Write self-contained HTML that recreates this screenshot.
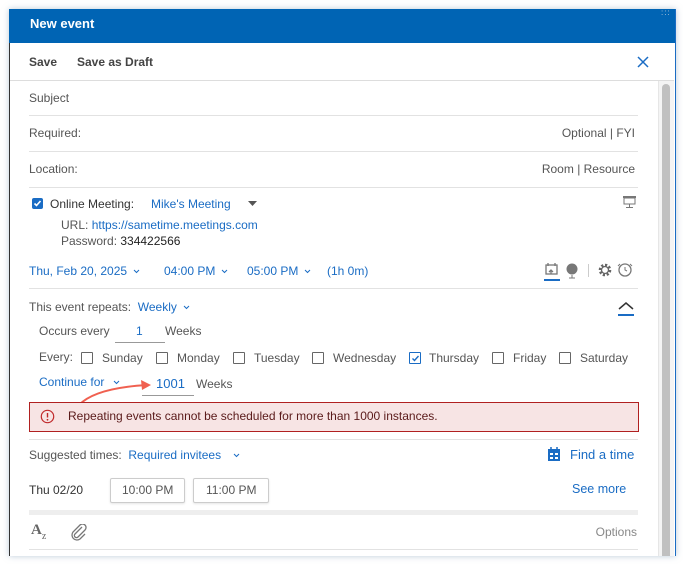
<!DOCTYPE html>
<html><head><style>
body{margin:0;width:683px;height:564px;background:#fff;position:relative;overflow:hidden;font-family:"Liberation Sans",Arial,sans-serif;font-size:12px;color:#555}
.a{position:absolute;white-space:nowrap;line-height:14px}
.l{position:absolute;height:1px;background:#e2e2e2;left:29px;width:609px}
.b{color:#1a6cc4}
.cb{position:absolute;width:10px;height:10px;border:1px solid #666;border-radius:1px;background:#fff}
.cv{display:inline-block;width:7px;height:5px;vertical-align:middle;margin-left:6px}
</style></head><body>
<div style="position:absolute;left:9px;top:9px;width:665px;height:547px;border-left:1px solid #333;border-right:1px solid #1a6cc4;box-shadow:0 0 6px rgba(120,150,180,.5);background:#fff"></div>
<div style="position:absolute;left:9px;top:9px;width:666px;height:34px;background:#0064b4"></div>
<div class="a" style="left:30px;top:17px;color:#fff;font-weight:bold;font-size:13px">New event</div>
<div class="a" style="left:661px;top:10px;color:#bcd;font-size:8px;letter-spacing:1px;line-height:5px">:::</div>
<div class="a" style="left:29px;top:55px;font-weight:bold;color:#444">Save</div>
<div class="a" style="left:77px;top:55px;font-weight:bold;color:#444">Save as Draft</div>
<svg style="position:absolute;left:637px;top:56px" width="12" height="12"><path d="M1 1L11 11M11 1L1 11" stroke="#1a6cc4" stroke-width="1.5"/></svg>
<div style="position:absolute;left:10px;top:80px;width:664px;height:1px;background:#ddd"></div>
<div style="position:absolute;left:658px;top:81px;width:15px;height:475px;background:#f4f4f4;border-left:1px solid #e6e6e6"></div>
<div style="position:absolute;left:662px;top:84px;width:8px;height:472px;background:#c0c0c0;border-radius:4px 4px 0 0"></div>
<div class="a" style="left:29px;top:91px">Subject</div>
<div class="l" style="top:115px"></div>
<div class="a" style="left:29px;top:126px">Required:</div>
<div class="a" style="right:48px;top:126px">Optional | FYI</div>
<div class="l" style="top:151px"></div>
<div class="a" style="left:29px;top:162px">Location:</div>
<div class="a" style="right:48px;top:162px">Room | Resource</div>
<div class="l" style="top:187px"></div>
<div style="position:absolute;left:32px;top:198px;width:11px;height:11px;background:#1a6cc4;border-radius:2px"></div>
<svg style="position:absolute;left:32px;top:198px" width="11" height="11"><path d="M2.5 5.5L4.5 7.5L8.5 3" stroke="#fff" stroke-width="1.6" fill="none"/></svg>
<div class="a" style="left:50px;top:197px;color:#333">Online Meeting:</div>
<div class="a b" style="left:151px;top:197px">Mike's Meeting</div>
<svg style="position:absolute;left:248px;top:201px" width="9" height="6"><path d="M0 0H9L4.5 5z" fill="#555"/></svg>
<svg style="position:absolute;left:622px;top:195px" width="15" height="14"><rect x="1" y="1" width="13" height="2" fill="#777"/><rect x="2" y="3" width="11" height="6" fill="none" stroke="#777"/><path d="M7.5 9V12M4 12.5H11" stroke="#777"/></svg>
<div class="a" style="left:61px;top:218px">URL: <span class="b">https://sametime.meetings.com</span></div>
<div class="a" style="left:61px;top:234px">Password: <span style="color:#222">334422566</span></div>
<div class="a b" style="left:29px;top:264px">Thu, Feb 20, 2025<svg class="cv" viewBox="0 0 7 5"><path d="M1 1l2.5 2.5L6 1" stroke="#1a6cc4" fill="none"/></svg></div>
<div class="a b" style="left:164px;top:264px">04:00 PM<svg class="cv" viewBox="0 0 7 5"><path d="M1 1l2.5 2.5L6 1" stroke="#1a6cc4" fill="none"/></svg></div>
<div class="a b" style="left:247px;top:264px">05:00 PM<svg class="cv" viewBox="0 0 7 5"><path d="M1 1l2.5 2.5L6 1" stroke="#1a6cc4" fill="none"/></svg></div>
<div class="a b" style="left:327px;top:264px">(1h 0m)</div>
<svg style="position:absolute;left:543px;top:262px" width="100" height="20"><g fill="none" stroke="#777" stroke-width="1.3"><rect x="3" y="3" width="11" height="9"/><path d="M5 1v3M12 1v3M8 12V8M6 10l2-2 2 2"/></g><rect x="1" y="17" width="16" height="2" fill="#1a6cc4"/><circle cx="29" cy="7" r="5.5" fill="#777"/><path d="M29 13v3M26 16h6" stroke="#777"/><rect x="45" y="2" width="1" height="13" fill="#ccc"/><circle cx="62" cy="8" r="5" fill="none" stroke="#666" stroke-width="2.6" stroke-dasharray="2.2 1.7"/><circle cx="62" cy="8" r="3.5" fill="none" stroke="#666" stroke-width="1.3"/><circle cx="82" cy="8" r="6" fill="none" stroke="#777" stroke-width="1.3"/><path d="M82 5v3l2 1M77 2l-2 2M87 2l2 2" stroke="#777" fill="none"/></svg>
<div class="l" style="top:288px"></div>
<div class="a" style="left:29px;top:300px">This event repeats: &nbsp;<span class="b">Weekly<svg class="cv" viewBox="0 0 7 5"><path d="M1 1l2.5 2.5L6 1" stroke="#1a6cc4" fill="none"/></svg></span></div>
<svg style="position:absolute;left:617px;top:302px" width="18" height="14"><path d="M2 7L9 1L16 7" stroke="#333" stroke-width="1.5" fill="none"/><rect x="1" y="12" width="16" height="2" fill="#1a6cc4"/></svg>
<div class="a" style="left:39px;top:324px">Occurs every</div>
<div class="a b" style="left:136px;top:324px">1</div>
<div style="position:absolute;left:115px;top:342px;width:50px;height:1px;background:#999"></div>
<div class="a" style="left:165px;top:324px">Weeks</div>
<div class="a" style="left:39px;top:350px">Every:</div>
<div class="cb" style="left:81px;top:352px"></div><div class="a" style="left:102px;top:351px">Sunday</div>
<div class="cb" style="left:156px;top:352px"></div><div class="a" style="left:177px;top:351px">Monday</div>
<div class="cb" style="left:233px;top:352px"></div><div class="a" style="left:254px;top:351px">Tuesday</div>
<div class="cb" style="left:312px;top:352px"></div><div class="a" style="left:333px;top:351px">Wednesday</div>
<div class="cb" style="left:409px;top:352px;border-color:#1a6cc4"></div>
<svg style="position:absolute;left:411px;top:354px" width="9" height="9"><path d="M1.5 4.5L3.5 6.5L7.5 2" stroke="#1a6cc4" stroke-width="1.4" fill="none"/></svg>
<div class="a" style="left:429px;top:351px">Thursday</div>
<div class="cb" style="left:492px;top:352px"></div><div class="a" style="left:513px;top:351px">Friday</div>
<div class="cb" style="left:559px;top:352px"></div><div class="a" style="left:580px;top:351px">Saturday</div>
<div class="a b" style="left:39px;top:375px">Continue for<svg class="cv" style="margin-left:9px" viewBox="0 0 7 5"><path d="M1 1l2.5 2.5L6 1" stroke="#1a6cc4" fill="none"/></svg></div>
<div class="a b" style="left:156px;top:377px;font-size:13px">1001</div>
<div style="position:absolute;left:142px;top:395px;width:52px;height:1px;background:#999"></div>
<div class="a" style="left:196px;top:377px">Weeks</div>
<svg style="position:absolute;left:75px;top:378px" width="80" height="30"><path d="M4 27Q20 10 72 7" stroke="#f06050" stroke-width="2" fill="none"/><path d="M66 2L76 7L67 12z" fill="#f06050"/></svg>
<div style="position:absolute;left:29px;top:402px;width:608px;height:28px;background:#f7e4e4;border:1px solid #b02020"></div>
<svg style="position:absolute;left:40px;top:409px" width="15" height="15"><circle cx="7.5" cy="7.5" r="6.2" fill="none" stroke="#c0282a" stroke-width="1.2"/><path d="M7.5 4v4.5" stroke="#c0282a" stroke-width="1.4"/><circle cx="7.5" cy="10.8" r=".9" fill="#c0282a"/></svg>
<div class="a" style="left:68px;top:409px;color:#5a1a1a">Repeating events cannot be scheduled for more than 1000 instances.</div>
<div class="l" style="top:439px"></div>
<div class="a" style="left:29px;top:448px">Suggested times: &nbsp;<span class="b">Required invitees<svg class="cv" style="margin-left:12px" viewBox="0 0 7 5"><path d="M1 1l2.5 2.5L6 1" stroke="#1a6cc4" fill="none"/></svg></span></div>
<svg style="position:absolute;left:548px;top:447px" width="12" height="14"><rect x="0" y="2" width="12" height="12" fill="#1a6cc4"/><path d="M3 0v3M9 0v3" stroke="#1a6cc4" stroke-width="1.5"/><g fill="#fff"><rect x="2" y="6" width="3" height="2"/><rect x="7" y="6" width="3" height="2"/><rect x="2" y="10" width="3" height="2"/><rect x="7" y="10" width="3" height="2"/></g></svg>
<div class="a b" style="left:570px;top:448px;font-size:13px">Find a time</div>
<div class="a" style="left:29px;top:483px;color:#333;font-size:12px">Thu 02/20</div>
<div style="position:absolute;left:110px;top:478px;width:73px;height:23px;border:1px solid #ccc;border-radius:2px;box-shadow:0 1px 2px rgba(0,0,0,.1)"></div>
<div class="a" style="left:122px;top:483px">10:00 PM</div>
<div style="position:absolute;left:193px;top:478px;width:74px;height:23px;border:1px solid #ccc;border-radius:2px;box-shadow:0 1px 2px rgba(0,0,0,.1)"></div>
<div class="a" style="left:206px;top:483px">11:00 PM</div>
<div class="a b" style="left:572px;top:482px;font-size:12.5px">See more</div>
<div style="position:absolute;left:29px;top:510px;width:609px;height:5px;background:#eee"></div>
<div class="a" style="left:31px;top:523px;font-family:'Liberation Serif',serif;font-weight:bold;font-size:15px;color:#666">A<span style="font-size:10px;font-weight:normal;position:relative;top:5px">z</span></div>
<svg style="position:absolute;left:70px;top:524px" width="18" height="18"><path d="M12 3L5 10a2 2 0 0 0 3 3l7-7a3.5 3.5 0 0 0-5-5L3 8a5 5 0 0 0 7 7l5-5" stroke="#777" stroke-width="1.3" fill="none"/></svg>
<div class="a" style="right:46px;top:525px;color:#888">Options</div>
<div class="l" style="top:549px"></div>
</body></html>
